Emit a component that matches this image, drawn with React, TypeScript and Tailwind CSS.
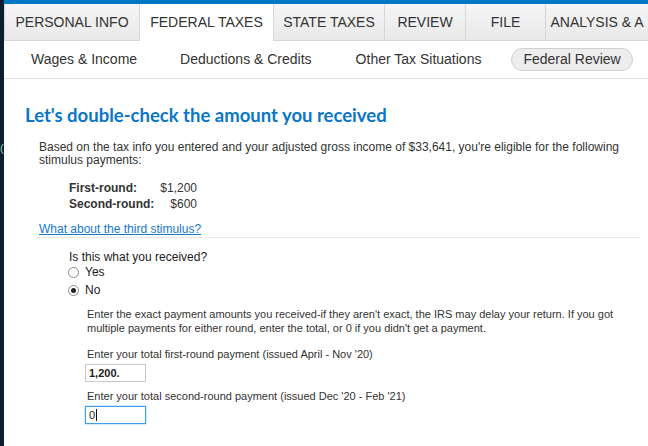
import React from "react";

const tabs = [
  { label: "PERSONAL INFO", w: "w-[135px]" },
  { label: "FEDERAL TAXES", w: "w-[134px]", active: true },
  { label: "STATE TAXES", w: "w-[111px]" },
  { label: "REVIEW", w: "w-[81px]" },
  { label: "FILE", w: "w-[80px]" },
  { label: "ANALYSIS & A", w: "w-[103px]" },
];

function Radio({ checked, label }: { checked?: boolean; label: string }) {
  return (
    <div className="flex h-[18px] items-center">
      <span className="flex h-[11px] w-[11px] items-center justify-center rounded-full border border-[#8a8a8a] bg-white">
        {checked && <span className="h-[5px] w-[5px] rounded-full bg-[#222]" />}
      </span>
      <span className="ml-[6px] text-[12px] text-[#222]">{label}</span>
    </div>
  );
}

export default function App() {
  return (
    <div className="flex h-[446px] w-[648px] overflow-hidden bg-white font-['Liberation_Sans',Arial,sans-serif] text-[#333]">
      <div className="flex w-[4px] shrink-0 flex-col bg-[#0c1d31] pt-[143px]">
        <span className="text-[11px] leading-none text-[#9fd0b0]">(</span>
      </div>
      <div className="flex min-w-0 flex-1 flex-col">
        <div className="h-[4px] bg-[#0077c5]" />
        <div className="flex h-[37px] overflow-hidden">
          {tabs.map((t) => (
            <div
              key={t.label}
              className={
                t.active
                  ? `${t.w} flex shrink-0 items-center justify-center whitespace-nowrap border-l border-[#d6d6d6] bg-white text-[14px] text-[#333]`
                  : `${t.w} flex shrink-0 items-center justify-center whitespace-nowrap border-b border-l border-[#d6d6d6] bg-gradient-to-b from-[#f5f5f5] to-[#e9e9e9] text-[14px] text-[#333]`
              }
            >
              {t.label}
            </div>
          ))}
        </div>
        <div className="flex h-[38px] items-center whitespace-nowrap border-b border-[#e0e0e0] text-[14px] text-[#333]">
          <span className="ml-[27px]">Wages &amp; Income</span>
          <span className="ml-[43px]">Deductions &amp; Credits</span>
          <span className="ml-[44px]">Other Tax Situations</span>
          <span className="ml-[30px] flex h-[23px] items-center rounded-full border border-[#cfcfcf] bg-[#ededed] px-[11px]">
            Federal Review
          </span>
        </div>

        <div className="flex flex-col pl-[21px] pr-[8px]">
          <h1 className="mt-[24px] font-['Lato',sans-serif] text-[18.5px] font-bold leading-[24px] text-[#0a76c4]">
            Let's double-check the amount you received
          </h1>
          <div className="ml-[14px] mt-[14px] text-[12px] leading-[13px]">
            Based on the tax info you entered and your adjusted gross income of $33,641, you're eligible for the following stimulus payments:
          </div>
          <div className="ml-[44px] mt-[13px] grid w-max grid-cols-[auto_auto] gap-x-[6px] text-[12px] leading-[16px]">
            <span className="font-bold">First-round:</span>
            <span className="text-right">$1,200</span>
            <span className="font-bold">Second-round:</span>
            <span className="text-right">$600</span>
          </div>
          <div className="ml-[11px] mt-[10px] border-b border-[#e8e8e8] pb-[1px] pl-[3px] text-[12px] leading-[14px]">
            <a className="text-[#1478c8] underline">What about the third stimulus?</a>
          </div>
          <div className="ml-[44px] mt-[12px] text-[12px] leading-[14px] text-[#222]">Is this what you received?</div>
          <div className="-mt-[1px] ml-[43px] flex flex-col">
            <Radio label="Yes" />
            <Radio checked label="No" />
          </div>
          <div className="ml-[62px] mt-[8px] flex flex-col pr-[10px] text-[11px] text-[#333]">
            <p className="leading-[14px]">
              Enter the exact payment amounts you received-if they aren't exact, the IRS may delay your return. If you got multiple payments for either round, enter the total, or 0 if you didn't get a payment.
            </p>
            <label className="mt-[12px] leading-[14px]">Enter your total first-round payment (issued April - Nov '20)</label>
            <div className="-ml-[2px] mt-[3px] flex h-[18px] w-[61px] items-center border border-[#c8c8c8] bg-white px-[3px] text-[11px] font-bold text-[#222]">
              1,200.
            </div>
            <label className="mt-[7px] leading-[14px]">Enter your total second-round payment (issued Dec '20 - Feb '21)</label>
            <div className="-ml-[2px] mt-[3px] flex h-[18px] w-[61px] items-center border border-[#3f9ee6] bg-white px-[3px] text-[11px] text-[#222] shadow-[0_0_2px_#7cc0f2]">
              0<span className="ml-px h-[12px] w-px bg-[#111]" />
            </div>
          </div>
        </div>
      </div>
    </div>
  );
}
